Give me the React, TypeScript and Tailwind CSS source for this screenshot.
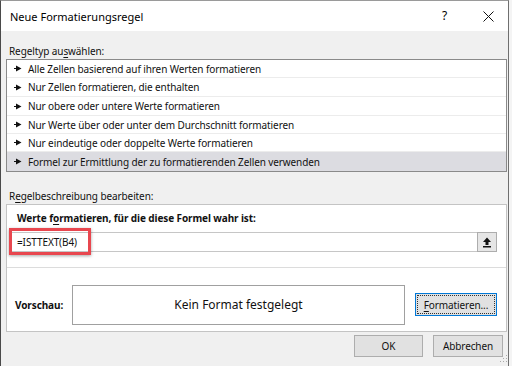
import React from "react";

const rules = [
  { text: "Alle Zellen basierend auf ihren Werten formatieren", h: "h-[18px]", sel: false },
  { text: "Nur Zellen formatieren, die enthalten", h: "h-[19px]", sel: false },
  { text: "Nur obere oder untere Werte formatieren", h: "h-[19px]", sel: false },
  { text: "Nur Werte über oder unter dem Durchschnitt formatieren", h: "h-[18px]", sel: false },
  { text: "Nur eindeutige oder doppelte Werte formatieren", h: "h-[18px]", sel: false },
  { text: "Formel zur Ermittlung der zu formatierenden Zellen verwenden", h: "h-[19px]", sel: true },
];

function Arrow() {
  return (
    <svg width="8" height="7" viewBox="0 0 8 7" className="shrink-0">
      <path d="M0 3 L2 3 L2 0.5 L7.5 3.5 L2 6.5 L2 4 L0 4 Z" fill="#111" />
    </svg>
  );
}

export default function App() {
  return (
    <div className="relative w-[512px] h-[366px] overflow-hidden bg-[#f4f4f4] font-['Noto_Sans',sans-serif] text-[10px] tracking-[-0.1px] text-[#111]">
      <div className="flex flex-col w-[509px] h-[366px] border-l border-r border-t border-l-[#4a4a4a] border-r-[#6f6f6f] border-t-[#9a9a9a] bg-[#f0f0f0]">
        {/* title bar */}
        <div className="flex items-center h-[30px] bg-white shrink-0">
          <div className="pl-[9px] text-[11px] tracking-normal text-black leading-none">Neue Formatierungsregel</div>
          <div className="ml-auto mr-[36px] text-[12px] text-black leading-none">?</div>
          <svg width="11" height="11" viewBox="0 0 11 11" className="mr-[14px]">
            <path d="M0.5 0.5 L10.5 10.5 M10.5 0.5 L0.5 10.5" stroke="#111" strokeWidth="1" />
          </svg>
        </div>
        {/* body */}
        <div className="flex flex-col px-[5px] pt-[12px]">
          <div className="h-[16px] leading-[16px] pl-[3px]">
            Regeltyp au<span className="underline underline-offset-2">s</span>wählen:
          </div>
          <div className="flex flex-col border border-[#8a8a8a] bg-white w-[501px]">
            {rules.map((r, i) => (
              <div
                key={i}
                className={`flex items-center gap-[6px] pl-[7px] ${r.h} ${i < rules.length - 1 ? "border-b border-[#ececec]" : ""} ${r.sel ? "bg-[#dcdce1]" : ""}`}
              >
                <Arrow />
                <span className="leading-none">{r.text}</span>
              </div>
            ))}
          </div>
          <div className="mt-[16px] h-[16px] leading-[16px] pl-[3px]">
            R<span className="underline underline-offset-2">e</span>gelbeschreibung bearbeiten:
          </div>
          <div className="flex flex-col border border-[#c4c4c4] bg-white w-[501px] h-[128px]">
            <div className="flex flex-col h-[63px] border-b border-[#dcdcdc]">
              <div className="h-[27px] pl-[10px] pt-[8px] font-bold leading-none">
                Werte f<span className="underline underline-offset-2">o</span>rmatieren, für die diese Formel wahr ist:
              </div>
              <div className="flex items-center ml-[4px] w-[486px] h-[20px] border border-[#c6c6c6]">
                <span className="pl-[5px] leading-none">=ISTTEXT(B4)</span>
                <div className="ml-auto flex items-center justify-center w-[20px] h-[20px] -mr-[1px] border border-[#adadad] bg-[#e6e6e6]">
                  <svg width="10" height="11" viewBox="0 0 10 11">
                    <path d="M5 0.5 L9 5 L6.5 5 L6.5 8 L3.5 8 L3.5 5 L1 5 Z" fill="#111" />
                    <rect x="1" y="9" width="8" height="1.5" fill="#111" />
                  </svg>
                </div>
              </div>
            </div>
            <div className="flex items-center h-[63px]">
              <div className="w-[65px] pl-[8px] pt-[10px] font-bold leading-none">Vorschau:</div>
              <div className="flex items-center justify-center w-[333px] h-[40px] mt-[10px] border border-[#a0a0a0] text-[12px] tracking-normal leading-none">
                Kein Format festgelegt
              </div>
              <div className="ml-[10px] mt-[10px] flex items-center justify-center w-[82px] h-[23px] border border-[#0078d7] bg-[#e1e1e1]">
                <div className="flex items-center justify-center w-[78px] h-[19px] border border-dotted border-[#333] leading-none">
                  <span className="underline underline-offset-2">F</span>ormatieren...
                </div>
              </div>
            </div>
          </div>
          <div className="flex justify-end gap-[10px] mt-[3px]">
            <div className="flex items-center justify-center w-[69px] h-[22px] border border-[#adadad] bg-[#e1e1e1]">OK</div>
            <div className="flex items-center justify-center w-[70px] h-[22px] border border-[#adadad] bg-[#e1e1e1]">Abbrechen</div>
          </div>
        </div>
      </div>
      {/* resize grip */}
      <svg width="8" height="8" viewBox="0 0 8 8" className="absolute left-[500px] top-[355px]">
        <rect x="6" y="0" width="1" height="1" fill="#aaa" />
        <rect x="3" y="3" width="1" height="1" fill="#aaa" />
        <rect x="6" y="3" width="1" height="1" fill="#aaa" />
        <rect x="0" y="6" width="1" height="1" fill="#aaa" />
        <rect x="3" y="6" width="1" height="1" fill="#aaa" />
        <rect x="6" y="6" width="1" height="1" fill="#aaa" />
      </svg>
      {/* red highlight */}
      <div className="absolute left-[9px] top-[228px] w-[82px] h-[27px] border-[3px] border-[#e8474f] shadow-[0_1px_3px_rgba(0,0,0,0.35)]" />
    </div>
  );
}
